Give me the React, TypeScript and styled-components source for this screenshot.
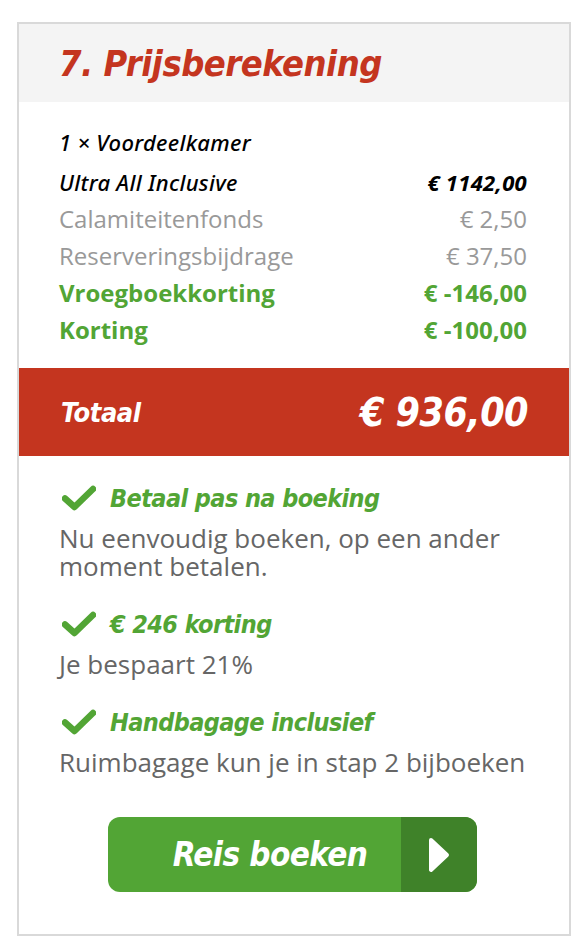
import { createGlobalStyle, styled } from "styled-components";

const GlobalStyle = createGlobalStyle`
	html, body {
		margin: 0;
		padding: 0;
		background: #ffffff;
	}
	body {
		font-family: "Open Sans", "Liberation Sans", sans-serif;
	}
`;

const colors = {
	red: "#c4351f",
	green: "#52a535",
	greenDark: "#3f8229",
	gray: "#999999",
	text: "#666666",
	border: "#d9d9d9",
	headerBg: "#f4f4f4",
};

const displayFont = `"DejaVu Sans Condensed", "DejaVu Sans", sans-serif`;

const Page = styled.div`
	padding: 22px 17px 18px 17px;
`;

const Card = styled.div`
	border: 2px solid ${colors.border};
	background: #fff;
	padding-bottom: 42px;
`;

const Header = styled.div`
	background: ${colors.headerBg};
	height: 78px;
	display: flex;
	align-items: center;
	padding: 0 40px;
`;

const Title = styled.h2`
	margin: 0;
	font-family: ${displayFont};
	font-style: italic;
	font-weight: 700;
	font-size: 36px;
	letter-spacing: -0.5px;
	color: ${colors.red};
`;

const Lines = styled.div`
	display: flex;
	flex-direction: column;
	padding: 21px 42px 20px 40px;
`;

const Line = styled.div<{ $tone: "dark" | "muted" | "discount" }>`
	display: flex;
	justify-content: space-between;
	align-items: center;
	height: 37px;
	font-size: 24px;
	color: ${({ $tone }) => ($tone === "dark" ? "#000" : $tone === "discount" ? colors.green : colors.gray)};
	font-weight: ${({ $tone }) => ($tone === "discount" ? 700 : 400)};
	${({ $tone }) =>
		$tone === "dark" &&
		`
		font-family: "Noto Sans", "Open Sans", sans-serif;
		font-style: italic;
		font-weight: 500;
		font-size: 22px;
		letter-spacing: 0.3px;
	`}

	&:first-child {
		margin-bottom: 3px;
	}
`;

const Amount = styled.span<{ $bold?: boolean }>`
	font-weight: ${({ $bold }) => ($bold ? 700 : "inherit")};
`;

const TotalBar = styled.div`
	background: ${colors.red};
	height: 88px;
	display: flex;
	align-items: center;
	justify-content: space-between;
	padding: 0 41px 0 42px;
	color: #fff;
	font-family: ${displayFont};
	font-style: italic;
	font-weight: 700;
`;

const TotalLabel = styled.span`
	font-size: 27px;
	letter-spacing: -0.5px;
`;

const TotalAmount = styled.span`
	font-size: 39px;
	letter-spacing: -0.5px;
`;

const Benefits = styled.div`
	display: flex;
	flex-direction: column;
	gap: 27px;
	padding: 25px 40px 0 40px;
`;

const Benefit = styled.div`
	display: flex;
	flex-direction: column;
`;

const BenefitHead = styled.div`
	display: flex;
	align-items: center;
	gap: 14px;
	height: 34px;
	padding-left: 3px;
`;

const BenefitTitle = styled.span`
	font-family: ${displayFont};
	font-style: italic;
	font-weight: 700;
	font-size: 25px;
	letter-spacing: -0.6px;
	color: ${colors.green};
`;

const BenefitText = styled.p`
	margin: 9px 0 0 0;
	font-size: 26px;
	line-height: 28px;
	color: ${colors.text};
`;

const ButtonRow = styled.div`
	display: flex;
	justify-content: center;
	padding-top: 41px;
	padding-right: 4px;
`;

const BookButton = styled.button`
	display: flex;
	width: 369px;
	height: 75px;
	border: 0;
	padding: 0;
	border-radius: 12px;
	overflow: hidden;
	cursor: pointer;
	background: ${colors.green};
`;

const ButtonLabel = styled.span`
	flex: 1;
	display: flex;
	align-items: center;
	justify-content: center;
	padding-left: 32px;
	color: #fff;
	font-family: ${displayFont};
	font-style: italic;
	font-weight: 700;
	font-size: 33px;
	letter-spacing: -0.6px;
`;

const ButtonArrow = styled.span`
	width: 76px;
	display: flex;
	align-items: center;
	justify-content: center;
	background: ${colors.greenDark};
`;

const Check = () => (
	<svg width="34" height="26" viewBox="0 0 34 26">
		<path d="M3 13.5 L12.5 22 L31 4" fill="none" stroke={colors.green} strokeWidth="6.5" strokeLinecap="round" strokeLinejoin="round" />
	</svg>
);

const Arrow = () => (
	<svg width="22" height="36" viewBox="0 0 22 36">
		<path d="M3 3 L19 18 L3 33 Z" fill="#fff" stroke="#fff" strokeWidth="4" strokeLinejoin="round" />
	</svg>
);

const lines = [
	{ label: "1 × Voordeelkamer", amount: "", tone: "dark" as const },
	{ label: "Ultra All Inclusive", amount: "€ 1142,00", tone: "dark" as const },
	{ label: "Calamiteitenfonds", amount: "€ 2,50", tone: "muted" as const },
	{ label: "Reserveringsbijdrage", amount: "€ 37,50", tone: "muted" as const },
	{ label: "Vroegboekkorting", amount: "€ -146,00", tone: "discount" as const },
	{ label: "Korting", amount: "€ -100,00", tone: "discount" as const },
];

const benefits = [
	{ title: "Betaal pas na boeking", text: "Nu eenvoudig boeken, op een ander moment betalen." },
	{ title: "€ 246 korting", text: "Je bespaart 21%" },
	{ title: "Handbagage inclusief", text: "Ruimbagage kun je in stap 2 bijboeken" },
];

export default function App() {
	return (
		<>
			<GlobalStyle />
			<Page>
				<Card>
					<Header>
						<Title>7. Prijsberekening</Title>
					</Header>
					<Lines>
						{lines.map((l) => (
							<Line key={l.label} $tone={l.tone}>
								<span>{l.label}</span>
								<Amount $bold={l.tone === "dark"}>{l.amount}</Amount>
							</Line>
						))}
					</Lines>
					<TotalBar>
						<TotalLabel>Totaal</TotalLabel>
						<TotalAmount>€ 936,00</TotalAmount>
					</TotalBar>
					<Benefits>
						{benefits.map((b) => (
							<Benefit key={b.title}>
								<BenefitHead>
									<Check />
									<BenefitTitle>{b.title}</BenefitTitle>
								</BenefitHead>
								<BenefitText>{b.text}</BenefitText>
							</Benefit>
						))}
					</Benefits>
					<ButtonRow>
						<BookButton>
							<ButtonLabel>Reis boeken</ButtonLabel>
							<ButtonArrow>
								<Arrow />
							</ButtonArrow>
						</BookButton>
					</ButtonRow>
				</Card>
			</Page>
		</>
	);
}
